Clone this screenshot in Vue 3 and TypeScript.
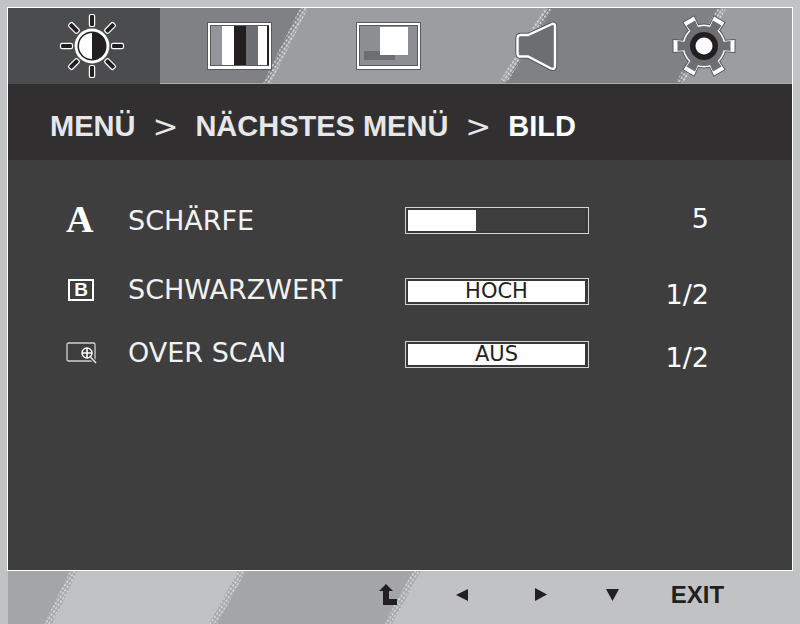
<script setup lang="ts">
import { computed, reactive, ref } from 'vue'

type Choice = { id: string; icon: 'black' | 'scan'; label: string; options: string[]; index: number }

const crumbs = ['MENÜ', 'NÄCHSTES MENÜ', 'BILD']
const tabs = ['Helligkeit', 'Farbe', 'Anzeige', 'Lautstärke', 'Sonstiges']
const activeTab = ref(0)

const sharpness = ref(5)
const maxSharpness = 13
const fill = computed(() => `${(sharpness.value / maxSharpness) * 100}%`)

const choices = reactive<Choice[]>([
  { id: 'black', icon: 'black', label: 'SCHWARZWERT', options: ['HOCH', 'NIEDRIG'], index: 0 },
  { id: 'scan', icon: 'scan', label: 'OVER SCAN', options: ['AUS', 'EIN'], index: 0 },
])

function next(choice: Choice) {
  choice.index = (choice.index + 1) % choice.options.length
}

const rays = [0, 45, 90, 135, 180, 225, 270, 315]
const teeth = [30, 90, 150, 210, 270, 330]
</script>

<template>
  <div class="osd">
    <main class="panel">
      <nav class="tabs">
        <svg class="backdrop" viewBox="0 0 784 76" preserveAspectRatio="none" aria-hidden="true">
          <defs>
            <pattern id="dots-top" width="4" height="3" patternUnits="userSpaceOnUse" patternTransform="rotate(-55)">
              <rect width="2.500" height="1.600" fill="#dcdddf" />
            </pattern>
          </defs>
          <rect width="784" height="76" fill="#9c9da1" />
          <path d="M152 0H296L259 76H152Z" fill="#808184" />
          <path d="M540 0H713L672 76H497Z" fill="#808184" />
          <path d="M292 0H300L263 75H255Z" fill="url(#dots-top)" />
          <path d="M536 1H544L500 73H492Z" fill="url(#dots-top)" />
          <path d="M709 1H718L676 74H668Z" fill="url(#dots-top)" />
          <path d="M152 75.500H784" stroke="#a9aaad" />
        </svg>
        <button
          v-for="(tab, i) in tabs"
          :key="tab"
          type="button"
          class="tab"
          :class="{ active: i === activeTab }"
          :aria-label="tab"
          @click="activeTab = i"
        >
          <svg v-if="i === 0" width="68" height="68" viewBox="-34 -34 68 68">
            <rect
              v-for="a in rays"
              :key="a"
              x="-2.6"
              y="-31.5"
              width="5.2"
              height="12"
              rx="1.6"
              fill="#231f20"
              stroke="#fff"
              stroke-width="1.2"
              :transform="`rotate(${a})`"
            />
            <circle r="17.4" fill="#fff" />
            <circle r="14.5" fill="#231f20" />
            <path d="M0-13A13 13 0 0 0 0 13Z" fill="#fff" />
          </svg>
          <svg v-else-if="i === 1" width="66" height="48" viewBox="0 0 66 48">
            <rect x=".5" y=".5" width="64" height="47" fill="#fff" stroke="#58595b" />
            <rect x="3" y="3" width="60" height="41" fill="#58595b" />
            <rect x="4" y="4" width="12" height="39" fill="#939598" />
            <rect x="15" y="4" width="12" height="39" fill="#fff" />
            <rect x="27" y="4" width="12" height="39" fill="#231f20" />
            <rect x="39" y="4" width="12" height="39" fill="#6d6e71" />
            <rect x="51" y="4" width="9" height="39" fill="#fff" />
            <rect x="60" y="4" width="2" height="39" fill="#231f20" />
            <path d="M63 2V46" stroke="#fff" stroke-width="2" />
          </svg>
          <svg v-else-if="i === 2" width="66" height="48" viewBox="0 0 66 48">
            <rect x=".5" y=".5" width="64" height="47" fill="#fff" stroke="#58595b" />
            <rect x="3.5" y="3.5" width="58" height="40" fill="#8d8e92" stroke="#58595b" />
            <rect x="8" y="29" width="31" height="9" fill="#6d6e71" />
            <rect x="24" y="5" width="28" height="28" fill="#fff" />
          </svg>
          <svg v-else-if="i === 3" width="44" height="50" viewBox="0 0 44 50">
            <path
              d="M6 14H14L38 3Q41 2 41 5V45Q41 49 37 47.500L14 35.500H6Q3.500 35.500 3.500 32V18Q3.500 14 6 14Z"
              fill="none"
              stroke="#58595b"
              stroke-width="4.400"
            />
            <path
              d="M6 14H14L38 3Q41 2 41 5V45Q41 49 37 47.500L14 35.500H6Q3.500 35.500 3.500 32V18Q3.500 14 6 14Z"
              fill="#6d6e71"
              stroke="#fff"
              stroke-width="2.400"
            />
          </svg>
          <svg v-else width="66" height="66" viewBox="-34 -33 66 66">
            <circle r="22.500" fill="#58595b" />
            <g v-for="a in teeth" :key="a" :transform="`rotate(${a})`">
              <path d="M-6-18L-7-31.500H7L6-18Z" fill="#58595b" />
              <path d="M-5-18L-6-30.500H6L5-18Z" fill="#fff" />
            </g>
            <circle r="21.500" fill="#fff" />
            <circle r="20" fill="#6d6e71" />
            <path v-for="a in teeth" :key="a" d="M-4-17L-5-26.500H5L4-17Z" fill="#6d6e71" :transform="`rotate(${a})`" />
            <circle r="14" fill="#231f20" />
            <circle r="8.500" fill="#fff" />
          </svg>
        </button>
      </nav>

      <header class="crumbs">
        <template v-for="(crumb, i) in crumbs" :key="crumb">
          <span v-if="i > 0" class="chevron">&gt;</span>
          <span :class="{ current: i === crumbs.length - 1 }">{{ crumb }}</span>
        </template>
      </header>

      <section class="settings">
        <div class="row row-slider">
          <span class="icon letter" aria-hidden="true">A</span>
          <label class="label" for="sharpness">SCHÄRFE</label>
          <div class="box">
            <input
              id="sharpness"
              v-model.number="sharpness"
              class="slider"
              type="range"
              min="0"
              :max="maxSharpness"
              :style="{ '--fill': fill }"
            />
          </div>
          <output class="value" for="sharpness">{{ sharpness }}</output>
        </div>

        <div v-for="choice in choices" :key="choice.id" class="row row-choice">
          <span class="icon" aria-hidden="true">
            <span v-if="choice.icon === 'black'" class="boxed">B</span>
            <svg v-else width="31" height="22" viewBox="0 0 31 22" fill="none">
              <rect x="1" y="1" width="28" height="18" rx="1.500" stroke="#d1d3d4" stroke-width="1.300" />
              <path d="M24.500 15L30 21" stroke="#3e3e3e" stroke-width="4" />
              <circle cx="21" cy="11" r="5" fill="#3e3e3e" stroke="#fff" stroke-width="1.400" />
              <path d="M21 6V16M16 11H26" stroke="#fff" stroke-width="1.600" />
              <path d="M24.500 15L30 21" stroke="#e6e7e8" stroke-width="1.500" />
            </svg>
          </span>
          <label class="label" :for="choice.id">{{ choice.label }}</label>
          <div class="box">
            <button :id="choice.id" class="choice" type="button" @click="next(choice)">
              {{ choice.options[choice.index] }}
            </button>
          </div>
          <span class="value">{{ choice.index + 1 }}/{{ choice.options.length }}</span>
        </div>
      </section>
    </main>

    <footer class="keys">
      <svg class="backdrop" viewBox="0 0 792 53" preserveAspectRatio="none" aria-hidden="true">
        <defs>
          <pattern id="dots-bottom" width="4" height="3" patternUnits="userSpaceOnUse" patternTransform="rotate(-55)">
            <rect width="2.500" height="1.600" fill="#dcdddf" />
          </pattern>
        </defs>
        <path d="M0 0H70L44 53H0ZM230 0H413L384 53H201Z" fill="#a4a5a9" />
        <path d="M62 0H70L44 53H36ZM230 0H238L209 53H201ZM405 0H413L384 53H376Z" fill="url(#dots-bottom)" />
      </svg>
      <button class="key" type="button" aria-label="Zurück">
        <svg width="20" height="22" viewBox="0 0 20 22" fill="#231f20">
          <path d="M7 0L14 7H10V15H18V21H4V7H0Z" />
        </svg>
      </button>
      <button class="key" type="button" aria-label="Links">
        <svg width="12" height="14" viewBox="0 0 12 14" fill="#231f20"><path d="M12 1V13L0 7Z" /></svg>
      </button>
      <button class="key" type="button" aria-label="Rechts">
        <svg width="12" height="14" viewBox="0 0 12 14" fill="#231f20"><path d="M0 0V13L12 6.500Z" /></svg>
      </button>
      <button class="key" type="button" aria-label="Unten">
        <svg width="14" height="14" viewBox="0 0 14 14" fill="#231f20"><path d="M0 1H13L6.500 13Z" /></svg>
      </button>
      <button class="key" type="button">EXIT</button>
    </footer>
  </div>
</template>

<style>
body {
  background: #c1c2c4;
}
</style>

<style scoped>
.osd {
  display: flex;
  flex-direction: column;
  box-sizing: border-box;
  min-height: 100vh;
  padding: 7px 0 0 7px;
  background: #c1c2c4;
  font-family: "DejaVu Sans", Verdana, sans-serif;
}

button {
  margin: 0;
  padding: 0;
  border: 0;
  background: none;
  color: inherit;
  font: inherit;
  cursor: pointer;
}

.panel {
  display: flex;
  flex: 1;
  flex-direction: column;
  margin-right: 7px;
  border: 1px solid #fff;
  background: #3e3e3e;
}

.tabs {
  position: relative;
  display: grid;
  grid-template-columns: 152fr 158fr 140fr 154fr 180fr;
  height: 76px;
}

.backdrop {
  position: absolute;
  inset: 0;
  width: 100%;
  height: 100%;
}

.tab {
  position: relative;
  display: flex;
  align-items: center;
  justify-content: center;
  padding-left: 2px;
}

.tab:first-child,
.tab.active {
  background: #4b4c4e;
}

.tab:nth-of-type(1) {
  padding-left: 16px;
}

.crumbs {
  display: flex;
  align-items: center;
  gap: 17px;
  box-sizing: border-box;
  height: 76px;
  padding: 8px 42px 0;
  background: #322f31;
  color: #e6e7e8;
  font: bold 29px/36px "Liberation Sans", Arial, sans-serif;
  white-space: nowrap;
}

.chevron {
  font: 31px/36px "DejaVu Sans", Verdana, sans-serif;
}

.current {
  color: #fff;
}

.settings {
  display: flex;
  flex: 1;
  flex-direction: column;
  gap: 28px;
  padding: 44px 83px 40px 58px;
  color: #fff;
  font-size: 27px;
  line-height: 30px;
}

.row {
  display: grid;
  grid-template-columns: 62px 1fr 184px 120px;
  align-items: start;
}

.row-slider {
  padding-bottom: 11px;
}

.row-slider .label {
  padding-top: 2px;
}

.row-choice .value {
  padding-top: 5px;
}

.icon {
  display: flex;
  align-items: center;
  height: 30px;
}

.letter {
  font: bold 38px/30px "Liberation Serif", "Times New Roman", serif;
}

.boxed {
  box-sizing: border-box;
  width: 26px;
  height: 22px;
  margin-left: 2px;
  border: 2px solid #fff;
  font: bold 19px/18px "Liberation Sans", Arial, sans-serif;
  text-align: center;
}

.label {
  color: #f1f2f2;
  white-space: nowrap;
}

.box {
  box-sizing: border-box;
  height: 27px;
  margin-top: 3px;
  padding: 2px 3px 2px 2px;
  border: 1px solid #d1d3d4;
  background: #3a3839;
}

.slider {
  display: block;
  width: 100%;
  height: 100%;
  margin: 0;
  appearance: none;
  background: linear-gradient(#fff, #fff) 0 0 / var(--fill) 100% no-repeat #3e3e3e;
  cursor: pointer;
}

.slider::-webkit-slider-thumb {
  appearance: none;
  width: 2px;
  height: 20px;
  background: transparent;
}

.choice {
  display: block;
  width: 100%;
  height: 21px;
  background: #fff;
  color: #231f20;
  font-size: 21px;
  line-height: 21px;
}

.value {
  text-align: right;
}

.keys {
  position: relative;
  display: grid;
  grid-template-columns: 72fr 74fr 84fr 60fr 110fr;
  height: 53px;
  margin-left: 1px;
  padding: 0 6% 0 43.5%;
  color: #231f20;
  font: bold 24px/28px "Liberation Sans", Arial, sans-serif;
}

.key {
  position: relative;
  display: flex;
  align-items: center;
  justify-content: center;
  height: 48px;
}
</style>
